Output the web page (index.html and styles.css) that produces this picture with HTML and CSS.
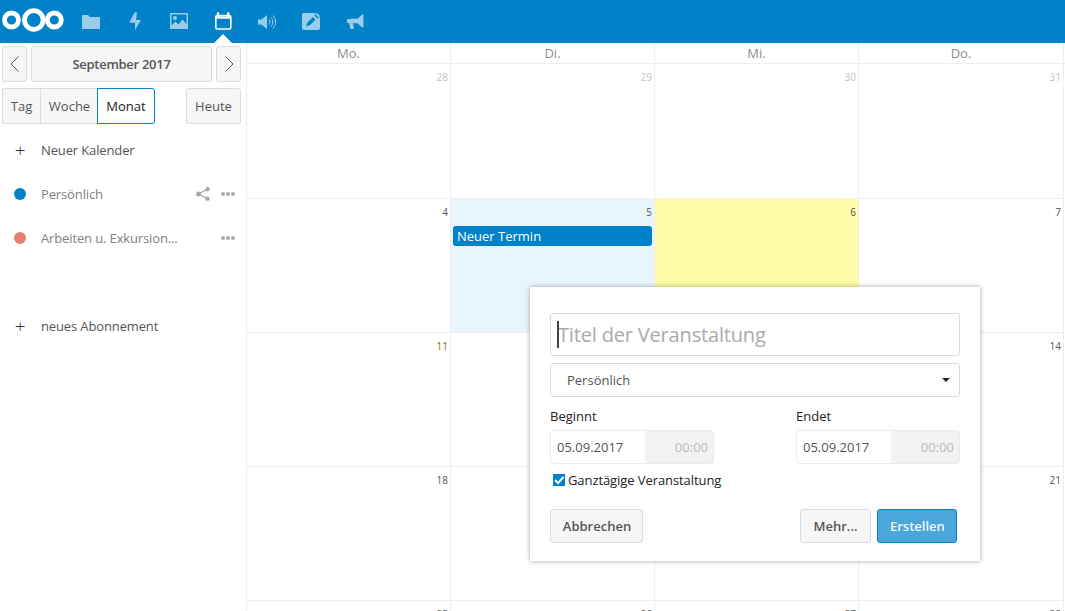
FILE: index.html
```html
<!DOCTYPE html>
<html lang="de">
<head>
<meta charset="utf-8">
<title>Kalender</title>
<link rel="stylesheet" href="styles.css">
</head>
<body>
<header class="topbar">
  <svg class="logo" width="65" height="43" viewBox="0 0 65 43"><g fill="none" stroke="#fff"><circle cx="31.800" cy="20" r="9.300" stroke-width="4.800"/><circle cx="9.500" cy="20" r="7" stroke-width="4.800"/><circle cx="52.300" cy="20" r="7" stroke-width="4.800"/></g></svg>
  <nav class="apps">
    <a class="app dim"><svg width="20" height="20" viewBox="0 0 20 20"><path fill="#fff" d="M1 5.500Q1 5 1.500 5H7l2 2h10v12H1z"/></svg></a>
    <a class="app dim"><svg width="20" height="20" viewBox="0 0 20 20"><path fill="#fff" d="M9.500 2.500 4.300 12.700H10V20l6-10h-5l1-7.500z"/></svg></a>
    <a class="app dim"><svg width="20" height="20" viewBox="0 0 20 20"><path fill="#fff" fill-rule="evenodd" d="M1 3h18v16H1zM2.500 4.500v11l4-4 3 3 4-5 4 4.500v-9.500zM6 6a2 2 0 1 1 0 4 2 2 0 0 1 0-4z"/></svg></a>
    <a class="app active"><svg width="20" height="20" viewBox="0 0 20 20"><g fill="none" stroke="#fff"><rect x="2.800" y="5.500" width="15" height="13.500" rx="1.500" stroke-width="1.600"/><path d="M2.800 7.500h15" stroke-width="2.400"/><path d="M5 3v3M15.300 3v3" stroke-width="2.200" stroke-linecap="round"/></g></svg></a>
    <a class="app dim"><svg width="20" height="20" viewBox="0 0 20 20"><path fill="#fff" d="M1 9.500h3.500L10 5v14l-5.500-4.500H1z"/><path fill="none" stroke="#fff" d="M12 9.500a3.500 3.500 0 0 1 0 5M14 7.500a6.500 6.500 0 0 1 0 9M16 5.500a9.500 9.500 0 0 1 0 13"/></svg></a>
    <a class="app dim"><svg width="20" height="20" viewBox="0 0 20 20"><path fill="#fff" fill-rule="evenodd" d="M2.500 3H15l-1.500 2.500 3 3L19 7v11a2 2 0 0 1-2 2H3a2 2 0 0 1-2-2V4.500A1.500 1.500 0 0 1 2.500 3zM12 7l-5.500 5.500L5 16.500l4-1.500 5.500-5.500z"/><path fill="#fff" d="M16 3l3 3-1.500 1.500-3-3z"/></svg></a>
    <a class="app dim"><svg width="20" height="20" viewBox="0 0 20 20"><path fill="#fff" d="M2 9l11-.5 4-4h1.500v13H17l-4-4-5-.5 1 6H5.500L4 13H2z"/></svg></a>
  </nav>
</header>
<div class="main">
  <aside class="sidebar">
    <div class="datebar">
      <button class="btn nav"><svg width="10" height="16" viewBox="0 0 10 16"><path fill="none" stroke="#555" d="M8.500 .5 1 8l7.500 7.500"/></svg></button>
      <button class="btn month">September 2017</button>
      <button class="btn nav"><svg width="10" height="16" viewBox="0 0 10 16"><path fill="none" stroke="#555" d="M1.500 .5 9 8l-7.500 7.500"/></svg></button>
    </div>
    <div class="viewbar">
      <div class="views">
        <button class="btn seg first">Tag</button><button class="btn seg">Woche</button><button class="btn seg current">Monat</button>
      </div>
      <button class="btn today">Heute</button>
    </div>
    <ul class="callist">
      <li class="item add"><span class="plus">+</span><span class="label">Neuer Kalender</span></li>
      <li class="item"><span class="slot"><i class="dot blue"></i></span><span class="label muted">Persönlich</span>
        <svg class="share" width="14" height="14" viewBox="0 0 14 14"><g fill="#aaa"><circle cx="2.500" cy="7" r="2.500"/><circle cx="11.500" cy="2.200" r="2.200"/><circle cx="11.500" cy="11.800" r="2.200"/></g><path stroke="#aaa" stroke-width="1.300" d="M2.500 7l9-4.800M2.500 7l9 4.800"/></svg>
        <span class="more"><i></i><i></i><i></i></span></li>
      <li class="item"><span class="slot"><i class="dot red"></i></span><span class="label muted">Arbeiten u. Exkursion...</span>
        <span class="more"><i></i><i></i><i></i></span></li>
      <li class="item add sub"><span class="plus">+</span><span class="label">neues Abonnement</span></li>
    </ul>
  </aside>
  <section class="calendar">
    <div class="heads"><div>Mo.</div><div>Di.</div><div>Mi.</div><div>Do.</div></div>
    <div class="grid">
      <div class="day other">28</div><div class="day other">29</div><div class="day other">30</div><div class="day other">31</div>
      <div class="day">4</div>
      <div class="day selected">5<div class="event">Neuer Termin</div></div>
      <div class="day now">6</div>
      <div class="day">7</div>
      <div class="day sat">11</div><div class="day">12</div><div class="day">13</div><div class="day">14</div>
      <div class="day">18</div><div class="day">19</div><div class="day">20</div><div class="day">21</div>
      <div class="day">25</div><div class="day">26</div><div class="day">27</div><div class="day">28</div>
    </div>
  </section>
</div>
<form class="dialog">
  <div class="title-field"><span class="caret"></span><span class="ph">Titel der Veranstaltung</span></div>
  <div class="select"><span>Persönlich</span><i class="arrow"></i></div>
  <div class="dates">
    <div class="dategroup">
      <div class="cap">Beginnt</div>
      <div class="pair"><span class="d">05.09.2017</span><span class="t">00:00</span></div>
    </div>
    <div class="dategroup">
      <div class="cap">Endet</div>
      <div class="pair"><span class="d">05.09.2017</span><span class="t">00:00</span></div>
    </div>
  </div>
  <div class="allday"><span class="check"><svg width="12" height="12" viewBox="0 0 12 12"><path fill="none" stroke="#fff" stroke-width="2" d="M2 6l3 3 5.500-6"/></svg></span><span class="alltext">Ganztägige Veranstaltung</span></div>
  <div class="actions">
    <button class="btn act cancel" type="button">Abbrechen</button>
    <span class="right">
      <button class="btn act" type="button">Mehr...</button>
      <button class="btn act primary" type="button">Erstellen</button>
    </span>
  </div>
</form>
</body>
</html>
```
FILE: styles.css
```css
* { box-sizing: border-box; }
html, body { margin: 0; height: 100%; overflow: hidden; }
body { font-family: "Open Sans", "Liberation Sans", sans-serif; font-size: 13px; color: #555; background: #fff; }
.topbar { height: 43px; background: #0082c9; display: flex; position: relative; }
.logo { display: block; margin-left: 2px; flex: none; }
.apps { display: flex; margin-left: 2px; }
.app { width: 44px; height: 43px; display: flex; align-items: center; justify-content: center; position: relative; padding-bottom: 3px; }
.app.dim svg { opacity: .6; }
.app.active::after { content: ""; position: absolute; left: 50%; bottom: 0; margin-left: -9px; border: 9px solid transparent; border-top: 0; border-bottom-color: #fff; }
.main { display: flex; height: 568px; }
.sidebar { width: 247px; flex: none; border-right: 1px solid #eee; padding: 3px 5px 0 2px; }
.btn { font: inherit; color: #555; background: #f6f6f6; border: 1px solid #dbdbdb; border-radius: 3px; padding: 0; margin: 0; }
.datebar { display: flex; gap: 4px; height: 36px; }
.nav { width: 25px; display: flex; align-items: center; justify-content: center; }
.month { flex: 1; font-weight: 600; letter-spacing: -.28px; }
.viewbar { display: flex; justify-content: space-between; margin-top: 6px; height: 36px; }
.views { display: flex; }
.seg { height: 36px; border-radius: 0; border-right: 0; width: 57px; padding-left: 1px; }
.seg.first { width: 38px; border-radius: 3px 0 0 3px; padding-left: 0; }
.seg.current { width: 58px; background: #fff; color: #222; border: 1px solid #0082c9; border-radius: 0 3px 3px 0; padding-left: 0; }
.today { width: 55px; }
.callist { list-style: none; margin: 4px 0 0; padding: 0; }
.item { height: 44px; display: flex; align-items: center; color: #555; margin-left: -2px; letter-spacing: -.13px; }
.plus, .slot { width: 41px; flex: none; display: flex; justify-content: center; padding-right: 1px; color: #333; }
.plus { font-size: 19px; line-height: 20px; font-weight: 300; }
.label { flex: 1; white-space: nowrap; }
.muted { color: #808080; }
.dot { width: 12px; height: 12px; border-radius: 50%; display: block; }
.blue { background: #0082c9; }
.red { background: #e67e73; }
.share { margin-right: 11px; }
.more { display: flex; gap: 1px; width: 14px; margin-right: 6px; }
.more i { width: 4px; height: 4px; border-radius: 50%; background: #aaa; flex: none; }
.sub { margin-top: 44px; }
.calendar { flex: 1; min-width: 0; }
.heads { display: grid; grid-template-columns: repeat(3, 204px) 205px; height: 21px; border-bottom: 1px solid #eee; }
.heads div { text-align: center; color: #8d8d8d; line-height: 20px; border-right: 1px solid #eee; }
.grid { display: grid; grid-template-columns: repeat(3, 204px) 205px; grid-template-rows: 135px; grid-auto-rows: 134px; }
.day { border-right: 1px solid #eee; border-bottom: 1px solid #eee; text-align: right; padding: 6px 2px 0 2px; font-size: 10px; line-height: 14px; color: #555; }
.other { color: #c2c2c2; }
.sat { color: #a15f00; }
.selected { background: #e8f6fc; }
.now { background: #fffba6; }
.event { margin-top: 7px; height: 20px; background: #0082c9; color: #fff; border-radius: 3px; font-size: 13px; line-height: 20px; text-align: left; padding-left: 4px; }
.dialog { position: absolute; left: 530px; top: 287px; width: 450px; height: 274px; background: #fff; box-shadow: 0 0 5px rgba(0,0,0,.35); padding: 26px 20px 0 20px; }
.title-field { height: 43px; border: 1px solid #dbdbdb; border-radius: 3px; position: relative; display: flex; align-items: center; padding-left: 7px; font-size: 20px; color: #aaa; letter-spacing: -.17px; }
.caret { position: absolute; left: 6px; top: 7px; width: 2px; height: 27px; background: #444; }
.select { height: 34px; margin-top: 7px; border: 1px solid #dbdbdb; border-radius: 3px; display: flex; align-items: center; justify-content: space-between; padding: 0 9px 0 16px; color: #555; }
.arrow { border: 4px solid transparent; border-top-color: #222; border-bottom: 0; }
.dates { display: flex; justify-content: space-between; margin-top: 9px; }
.dategroup { width: 164px; }
.cap { color: #222; height: 20px; line-height: 20px; }
.pair { display: flex; height: 34px; margin-top: 4px; border: 1px solid #ebebeb; border-radius: 3px; overflow: hidden; }
.d { width: 94px; padding-left: 6px; line-height: 32px; color: #555; }
.t { flex: 1; background: #f2f2f2; text-align: right; padding-right: 5px; color: #bbb; line-height: 32px; }
.allday { display: flex; align-items: center; margin-top: 6px; height: 20px; color: #222; padding-left: 3px; gap: 3px; }
.alltext { letter-spacing: -.08px; }
.check { width: 12px; height: 12px; background: #0082c9; display: block; }
.check svg { display: block; }
.actions { display: flex; justify-content: space-between; margin-top: 19px; }
.right { display: flex; gap: 6px; margin-right: 3px; }
.act { height: 34px; font-weight: 600; padding: 0 12px; }
.cancel { width: 93px; padding: 0 0 0 1px; }
.primary { background: #4ba6da; border-color: #0082c9; color: #f0f8fc; }
.right .act:first-child { width: 71px; }
.right .primary { width: 80px; }
```
